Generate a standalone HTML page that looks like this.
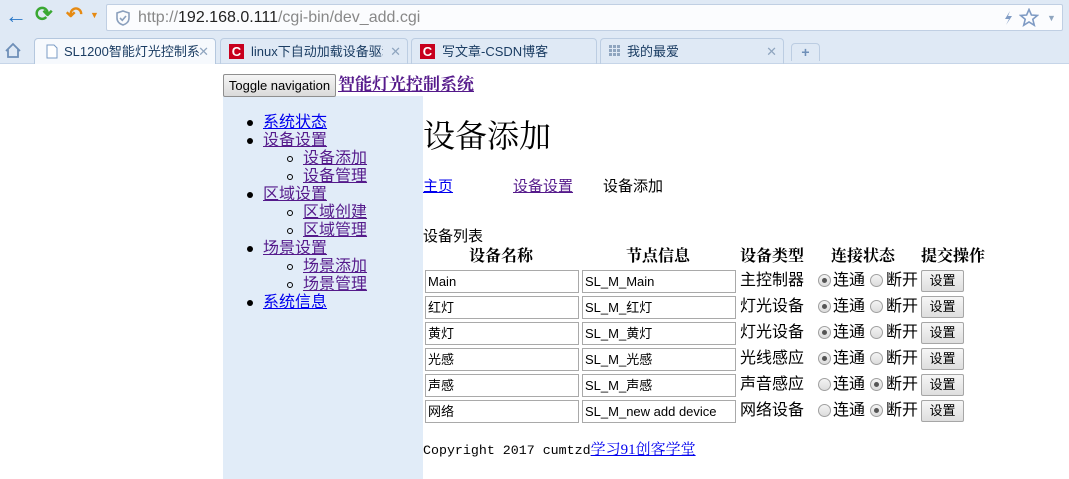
<!DOCTYPE html>
<html><head><meta charset="utf-8"><style>
*{margin:0;padding:0;box-sizing:border-box}
body{width:1069px;height:479px;overflow:hidden;background:#fff;position:relative;font-family:"Liberation Sans","Noto Sans CJK SC",sans-serif;font-size:16px;color:#000}
.a{position:absolute;white-space:nowrap}
.serif{font-family:"Liberation Serif","Noto Serif CJK SC",serif}
a{color:#0000ee}
a.v{color:#551a8b}
.chrome{position:absolute;left:0;top:0;width:1069px;height:64px;background:#dfe9f5;border-bottom:1px solid #c6d5e8}
.url{position:absolute;left:106px;top:4px;width:957px;height:27px;background:#fbfcfe;border:1px solid #c0cfe3;border-radius:2px}
.tab{position:absolute;top:38px;height:26px;border:1px solid #bccde2;border-bottom:none;border-radius:4px 4px 0 0;font-size:13px;color:#1b3d63}
.tt{position:absolute;left:29px;top:5px;line-height:15px;white-space:nowrap;overflow:hidden}
.cs{position:absolute;left:8px;top:5px;width:15px;height:15px;background:#c8001e;color:#fff;font-weight:bold;font-size:13px;line-height:15px;text-align:center}
.x{position:absolute;right:6px;top:5px;color:#8fa5bf;font-size:13px;line-height:15px}
.side{position:absolute;left:223px;top:96px;width:200px;height:383px;background:#e1ecf8}
.li{position:absolute;font-size:16px;line-height:18px}
.dot{position:absolute;width:6px;height:6px;border-radius:50%;background:#000}
.cir{position:absolute;width:6px;height:6px;border-radius:50%;border:1px solid #000}
.inp{position:absolute;height:23px;border:1px solid #a9a9a9;font-size:13px;padding:3px 2px;line-height:15px;background:#fff;white-space:nowrap}
.rad{position:absolute;width:13px;height:13px;border-radius:50%;border:1px solid #a0a0a0;background:linear-gradient(#f4f4f4,#dcdcdc)}
.rad.on::after{content:"";position:absolute;left:3px;top:3px;width:5px;height:5px;border-radius:50%;background:#555}
.btn{position:absolute;width:43px;height:22px;border:1px solid #a6a6a6;border-radius:2px;background:linear-gradient(#f6f6f6,#dedede);font-size:13px;text-align:center;line-height:20px}
.th{position:absolute;font-weight:bold;font-size:16px;line-height:18px;font-family:"Liberation Serif","Noto Serif CJK SC",serif}
.td{position:absolute;font-size:16px;line-height:18px;white-space:nowrap}
</style></head><body>
<div class="chrome">
 <div class="a" style="left:5px;top:5px;color:#2a78c8;font-size:22px;font-weight:bold;line-height:22px">&#8592;</div>
 <div class="a" style="left:35px;top:4px;color:#3aa832;font-size:21px;font-weight:bold;line-height:22px">&#10227;</div>
 <div class="a" style="left:66px;top:4px;color:#e68a12;font-size:20px;font-weight:bold;line-height:22px">&#8630;</div>
 <div class="a" style="left:90px;top:10px;color:#e68a12;font-size:9px">&#9660;</div>
 <div class="url">
  <svg class="a" style="left:9px;top:5px" width="14" height="16" viewBox="0 0 14 16"><path d="M7 1 L13 3 V8 C13 12 10 14 7 15 C4 14 1 12 1 8 V3 Z" fill="none" stroke="#8ba0bd" stroke-width="1.6"/><path d="M4 8 L6.3 10.3 L10 6" fill="none" stroke="#8ba0bd" stroke-width="1.6"/></svg>
  <div class="a" style="left:31px;top:3px;font-size:16px;line-height:19px;color:#888">http://<span style="color:#222">192.168.0.111</span>/cgi-bin/dev_add.cgi</div>
  <svg class="a" style="left:896px;top:5px" width="10" height="16" viewBox="0 0 10 16"><path d="M7 1 L2 9 H6 L3 15 L9 6 H5 Z" fill="#7f9bc4"/></svg>
  <svg class="a" style="left:912px;top:3px" width="20" height="19" viewBox="0 0 20 19"><path d="M10 1.5 L12.4 7 L18.4 7.4 L13.8 11.3 L15.3 17.3 L10 14 L4.7 17.3 L6.2 11.3 L1.6 7.4 L7.6 7 Z" fill="none" stroke="#7f9bc4" stroke-width="1.6"/></svg>
  <div class="a" style="left:940px;top:8px;color:#8fa5bf;font-size:9px">&#9660;</div>
 </div>
 <svg class="a" style="left:4px;top:42px" width="18" height="17" viewBox="0 0 18 17"><path d="M2 9 L9 2 L16 9 M4 7 V15 H14 V7" fill="none" stroke="#6e8fb8" stroke-width="1.8"/></svg>
 <div class="tab" style="left:34px;width:182px;background:#f6f9fd;border-color:#b4c7de">
  <svg class="a" style="left:11px;top:5px" width="12" height="15" viewBox="0 0 12 15"><path d="M1 1 H8 L11 4 V14 H1 Z" fill="#fff" stroke="#7a9bc5"/></svg><span class="tt" style="width:135px">SL1200智能灯光控制系统</span><span class="x">&#10005;</span></div>
 <div class="tab" style="left:220px;width:188px"><span class="cs">C</span><span class="tt" style="left:30px;width:132px">linux下自动加载设备驱动</span><span class="x">&#10005;</span></div>
 <div class="tab" style="left:411px;width:186px"><span class="cs">C</span><span class="tt" style="left:30px">写文章-CSDN博客</span></div>
 <div class="tab" style="left:600px;width:184px"><svg class="a" style="left:8px;top:6px" width="12" height="12" viewBox="0 0 12 12"><g fill="#8fa5bf"><rect x="0" y="0" width="3" height="3"/><rect x="4" y="0" width="3" height="3"/><rect x="8" y="0" width="3" height="3"/><rect x="0" y="4" width="3" height="3"/><rect x="4" y="4" width="3" height="3"/><rect x="8" y="4" width="3" height="3"/><rect x="0" y="8" width="3" height="3"/><rect x="4" y="8" width="3" height="3"/><rect x="8" y="8" width="3" height="3"/></g></svg><span class="tt" style="left:26px">我的最爱</span><span class="x">&#10005;</span></div>
 <div class="tab" style="left:791px;width:29px;height:18px;top:43px;text-align:center;color:#6e8fb8;font-weight:bold;font-size:14px;line-height:16px">+</div>
</div>

<div class="side"></div>
<div class="a" style="left:223px;top:74px;width:113px;height:23px;border:1px solid #8f8f8f;border-radius:2px;background:linear-gradient(#f5f5f5,#dadada);font-size:13px;line-height:21px;text-align:center">Toggle navigation</div>
<div class="a serif" style="left:338px;top:75px;font-size:17px;line-height:20px;font-weight:bold"><a class="v" href="#">智能灯光控制系统</a></div>

<div class="dot" style="left:247px;top:120px"></div><div class="li" style="left:263px;top:114px"><a href="#">系统状态</a></div>
<div class="dot" style="left:247px;top:138px"></div><div class="li" style="left:263px;top:132px"><a class="v" href="#">设备设置</a></div>
<div class="cir" style="left:287px;top:156px"></div><div class="li" style="left:303px;top:150px"><a class="v" href="#">设备添加</a></div>
<div class="cir" style="left:287px;top:174px"></div><div class="li" style="left:303px;top:168px"><a class="v" href="#">设备管理</a></div>
<div class="dot" style="left:247px;top:192px"></div><div class="li" style="left:263px;top:186px"><a class="v" href="#">区域设置</a></div>
<div class="cir" style="left:287px;top:210px"></div><div class="li" style="left:303px;top:204px"><a class="v" href="#">区域创建</a></div>
<div class="cir" style="left:287px;top:228px"></div><div class="li" style="left:303px;top:222px"><a class="v" href="#">区域管理</a></div>
<div class="dot" style="left:247px;top:246px"></div><div class="li" style="left:263px;top:240px"><a class="v" href="#">场景设置</a></div>
<div class="cir" style="left:287px;top:264px"></div><div class="li" style="left:303px;top:258px"><a class="v" href="#">场景添加</a></div>
<div class="cir" style="left:287px;top:282px"></div><div class="li" style="left:303px;top:276px"><a class="v" href="#">场景管理</a></div>
<div class="dot" style="left:247px;top:300px"></div><div class="li" style="left:263px;top:294px"><a href="#">系统信息</a></div>

<div class="a serif" style="left:423px;top:116px;font-size:32px;line-height:40px">设备添加</div>
<div class="a" style="left:423px;top:178px;font-size:15px;line-height:18px"><a href="#">主页</a></div>
<div class="a" style="left:513px;top:178px;font-size:15px;line-height:18px"><a class="v" href="#">设备设置</a></div>
<div class="a" style="left:603px;top:178px;font-size:15px;line-height:18px">设备添加</div>
<div class="a" style="left:423px;top:228px;font-size:15px;line-height:18px">设备列表</div>

<div class="th" style="left:469px;top:248px">设备名称</div>
<div class="th" style="left:626px;top:248px">节点信息</div>
<div class="th" style="left:740px;top:248px">设备类型</div>
<div class="th" style="left:831px;top:248px">连接状态</div>
<div class="th" style="left:921px;top:248px">提交操作</div>

<div class="inp" style="left:425px;top:270px;width:154px">Main</div><div class="inp" style="left:582px;top:270px;width:154px">SL_M_Main</div>
<div class="td" style="left:740px;top:272px">主控制器</div><div class="rad on" style="left:818px;top:274px"></div><div class="td" style="left:833px;top:272px">连通</div><div class="rad" style="left:870px;top:274px"></div><div class="td" style="left:886px;top:272px">断开</div><div class="btn" style="left:921px;top:270px">设置</div>

<div class="inp" style="left:425px;top:296px;width:154px">红灯</div><div class="inp" style="left:582px;top:296px;width:154px">SL_M_红灯</div>
<div class="td" style="left:740px;top:298px">灯光设备</div><div class="rad on" style="left:818px;top:300px"></div><div class="td" style="left:833px;top:298px">连通</div><div class="rad" style="left:870px;top:300px"></div><div class="td" style="left:886px;top:298px">断开</div><div class="btn" style="left:921px;top:296px">设置</div>

<div class="inp" style="left:425px;top:322px;width:154px">黄灯</div><div class="inp" style="left:582px;top:322px;width:154px">SL_M_黄灯</div>
<div class="td" style="left:740px;top:324px">灯光设备</div><div class="rad on" style="left:818px;top:326px"></div><div class="td" style="left:833px;top:324px">连通</div><div class="rad" style="left:870px;top:326px"></div><div class="td" style="left:886px;top:324px">断开</div><div class="btn" style="left:921px;top:322px">设置</div>

<div class="inp" style="left:425px;top:348px;width:154px">光感</div><div class="inp" style="left:582px;top:348px;width:154px">SL_M_光感</div>
<div class="td" style="left:740px;top:350px">光线感应</div><div class="rad on" style="left:818px;top:352px"></div><div class="td" style="left:833px;top:350px">连通</div><div class="rad" style="left:870px;top:352px"></div><div class="td" style="left:886px;top:350px">断开</div><div class="btn" style="left:921px;top:348px">设置</div>

<div class="inp" style="left:425px;top:374px;width:154px">声感</div><div class="inp" style="left:582px;top:374px;width:154px">SL_M_声感</div>
<div class="td" style="left:740px;top:376px">声音感应</div><div class="rad" style="left:818px;top:378px"></div><div class="td" style="left:833px;top:376px">连通</div><div class="rad on" style="left:870px;top:378px"></div><div class="td" style="left:886px;top:376px">断开</div><div class="btn" style="left:921px;top:374px">设置</div>

<div class="inp" style="left:425px;top:400px;width:154px">网络</div><div class="inp" style="left:582px;top:400px;width:154px">SL_M_new add device</div>
<div class="td" style="left:740px;top:402px">网络设备</div><div class="rad" style="left:818px;top:404px"></div><div class="td" style="left:833px;top:402px">连通</div><div class="rad on" style="left:870px;top:404px"></div><div class="td" style="left:886px;top:402px">断开</div><div class="btn" style="left:921px;top:400px">设置</div>

<div class="a" style="left:423px;top:441px;line-height:18px;font-family:'Liberation Mono','Noto Sans CJK SC',monospace;font-size:13.3px">Copyright 2017 cumtzd<a href="#" style="font-family:'Liberation Serif','Noto Serif CJK SC',serif;font-size:15px">学习91创客学堂</a></div>
</body></html>
